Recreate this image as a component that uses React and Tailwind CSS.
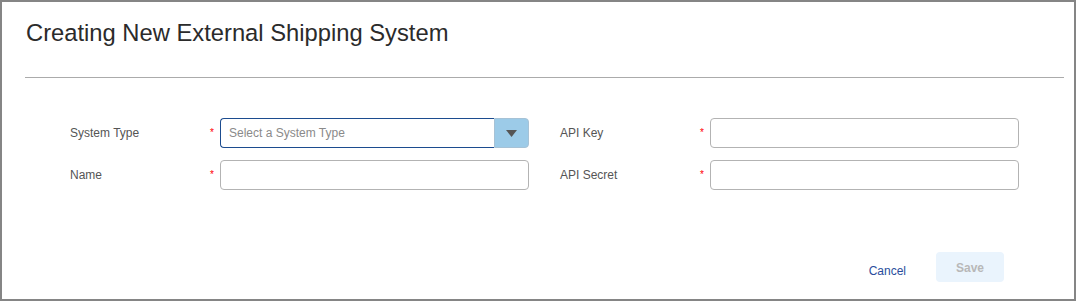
export default function App() {
  const font = "font-['Liberation_Sans','Arial',sans-serif]";
  const Label = ({ children }) => (
    <div className="w-[140px] text-[12px] text-[#555] leading-[30px]">{children}</div>
  );
  const Star = () => (
    <div className="w-[10px] text-[10px] text-[#ff0000] leading-[30px]">*</div>
  );
  const Input = () => (
    <div className="w-[309px] h-[30px] border border-[#b3b3b3] rounded-[4px] bg-white" />
  );
  return (
    <div className={`w-[1076px] h-[301px] border-2 border-[#858585] bg-white flex flex-col ${font}`}>
      <div className="pl-[23px] pr-[10px] pt-[18px]">
        <h1 className="text-[23.75px] leading-[26px] text-[#2b2b2b] pl-[1px]">
          Creating New External Shipping System
        </h1>
        <div className="mt-[31px] h-px bg-[#ababab]" />
      </div>
      <div className="pl-[68px] pt-[40px] flex gap-[31px]">
        <div className="flex flex-col gap-[12px]">
          <div className="flex">
            <Label>System Type</Label>
            <Star />
            <div className="flex w-[309px] h-[30px]">
              <div className="flex-1 border border-r-0 border-[#1c4c8f] rounded-l-[4px] text-[12px] text-[#8a8a8a] leading-[28px] pl-[8px]">
                Select a System Type
              </div>
              <div className="w-[35px] bg-[#9ccbe8] border border-[#a6c2d6] rounded-r-[4px] flex items-center justify-center">
                <svg width="11" height="7" viewBox="0 0 11 7">
                  <path d="M0 0 H11 L5.5 7 Z" fill="#555" />
                </svg>
              </div>
            </div>
          </div>
          <div className="flex">
            <Label>Name</Label>
            <Star />
            <Input />
          </div>
        </div>
        <div className="flex flex-col gap-[12px]">
          <div className="flex">
            <Label>API Key</Label>
            <Star />
            <Input />
          </div>
          <div className="flex">
            <Label>API Secret</Label>
            <Star />
            <Input />
          </div>
        </div>
      </div>
      <div className="mt-[62px] flex justify-end items-center pr-[70px]">
        <span className="text-[12px] text-[#2a4d9c] mr-[30px] mt-[7px]">Cancel</span>
        <button className="w-[68px] h-[30px] rounded-[4px] bg-[#eaf4fd] text-[12px] font-bold text-[#b8b8b8] pt-[1px]">
          Save
        </button>
      </div>
    </div>
  );
}
